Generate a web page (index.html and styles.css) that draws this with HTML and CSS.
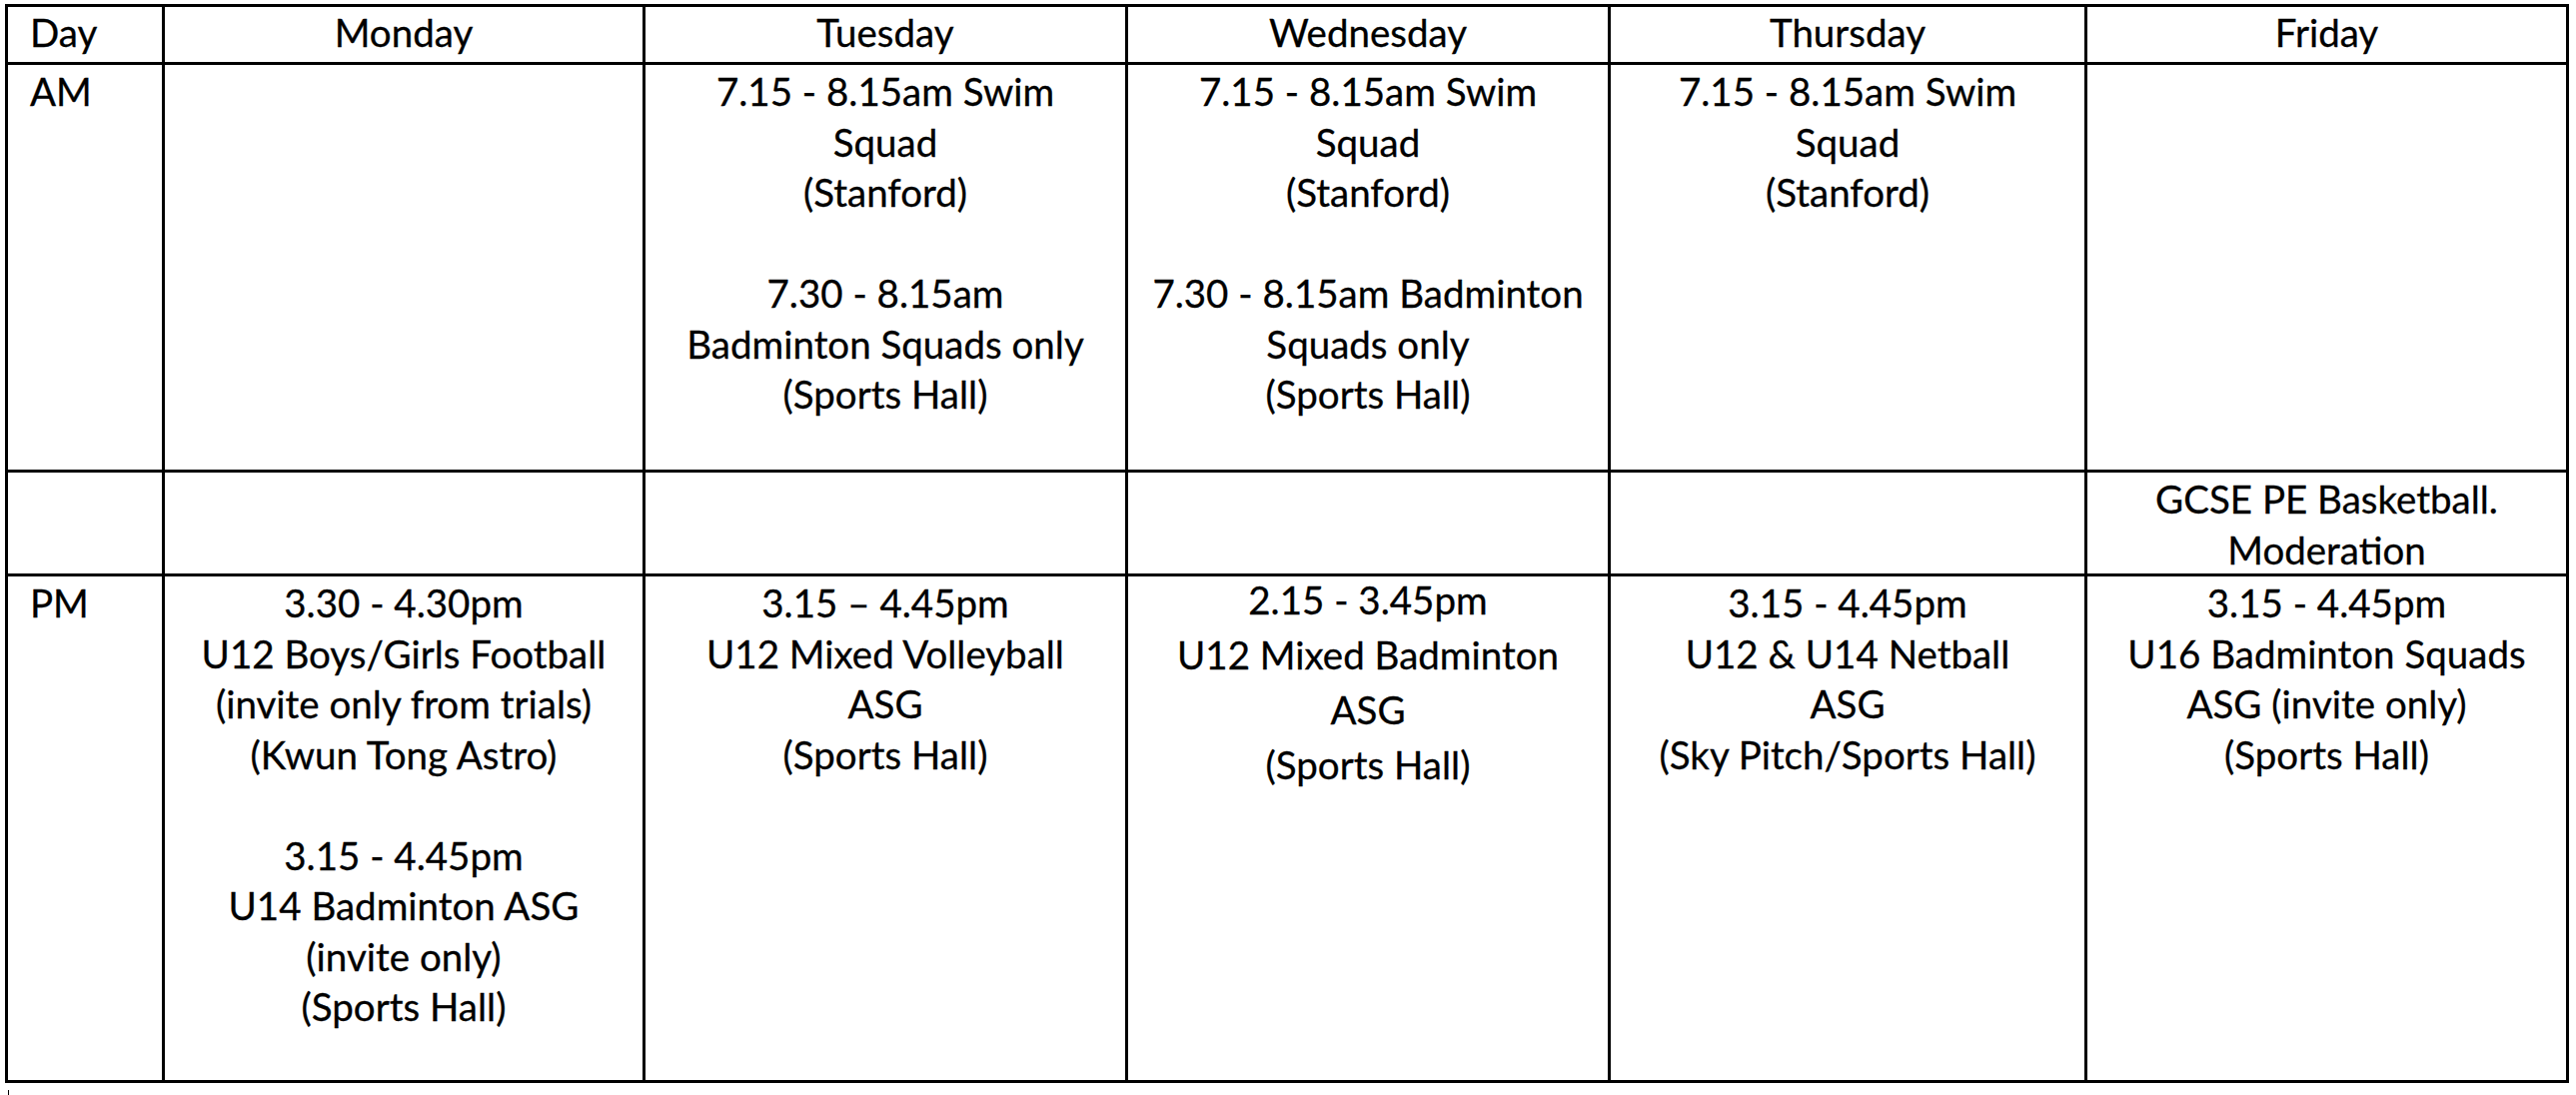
FILE: index.html
```html
<!DOCTYPE html>
<html lang="en">
<head>
<meta charset="utf-8">
<title>Sports timetable</title>
<link rel="stylesheet" href="styles.css">
</head>
<body>
<div class="timetable" role="table">
  <div class="cell head first" role="columnheader">Day</div>
  <div class="cell head" role="columnheader">Monday</div>
  <div class="cell head" role="columnheader">Tuesday</div>
  <div class="cell head" role="columnheader">Wednesday</div>
  <div class="cell head" role="columnheader">Thursday</div>
  <div class="cell head" role="columnheader">Friday</div>

  <div class="cell first" role="rowheader">AM</div>
  <div class="cell"></div>
  <div class="cell">7.15 - 8.15am Swim<br>Squad<br>(Stanford)<br><br>7.30 - 8.15am<br>Badminton Squads only<br>(Sports Hall)</div>
  <div class="cell">7.15 - 8.15am Swim<br>Squad<br>(Stanford)<br><br>7.30 - 8.15am Badminton<br>Squads only<br>(Sports Hall)</div>
  <div class="cell">7.15 - 8.15am Swim<br>Squad<br>(Stanford)</div>
  <div class="cell"></div>

  <div class="cell first"></div>
  <div class="cell"></div>
  <div class="cell"></div>
  <div class="cell"></div>
  <div class="cell"></div>
  <div class="cell">GCSE PE Basketball.<br>Moderation</div>

  <div class="cell first" role="rowheader">PM</div>
  <div class="cell">3.30 - 4.30pm<br>U12 Boys/Girls Football<br>(invite only from trials)<br>(Kwun Tong Astro)<br><br>3.15 - 4.45pm<br>U14 Badminton ASG<br>(invite only)<br>(Sports Hall)</div>
  <div class="cell">3.15 – 4.45pm<br>U12 Mixed Volleyball<br>ASG<br>(Sports Hall)</div>
  <div class="cell"><div class="spaced">2.15 - 3.45pm<br>U12 Mixed Badminton<br>ASG<br>(Sports Hall)</div></div>
  <div class="cell">3.15 - 4.45pm<br>U12 &amp; U14 Netball<br>ASG<br>(Sky Pitch/Sports Hall)</div>
  <div class="cell">3.15 - 4.45pm<br>U16 Badminton Squads<br>ASG (invite only)<br>(Sports Hall)</div>
</div>
<div class="caret"></div>
</body>
</html>
```
FILE: styles.css
```css
html, body {
  margin: 0;
  padding: 0;
  background: #ffffff;
}

body {
  font-family: Lato, "Noto Sans", "Liberation Sans", sans-serif;
  font-size: 38.5px;
  line-height: 50.5px;
  color: #000000;
  -webkit-text-stroke: 0.3px #000000;
  padding: 4px 0 0 5px;
}

.timetable {
  display: grid;
  grid-template-columns: 154px 478px 480px 480px 474px 479px;
  grid-template-rows: 55px 405px 101px 504px;
  gap: 3px;
  padding: 3px;
  background: #000000;
  width: max-content;
}

.cell {
  background: #ffffff;
  text-align: center;
  padding-top: 1px;
  white-space: nowrap;
}

.cell.head {
  padding-top: 0;
}

.cell.first {
  text-align: left;
  padding-left: 22px;
}

.spaced {
  line-height: 55px;
  margin-top: -5px;
}

.caret {
  width: 1px;
  height: 5px;
  margin: 7px 0 0 3px;
  background: #000000;
}
```
